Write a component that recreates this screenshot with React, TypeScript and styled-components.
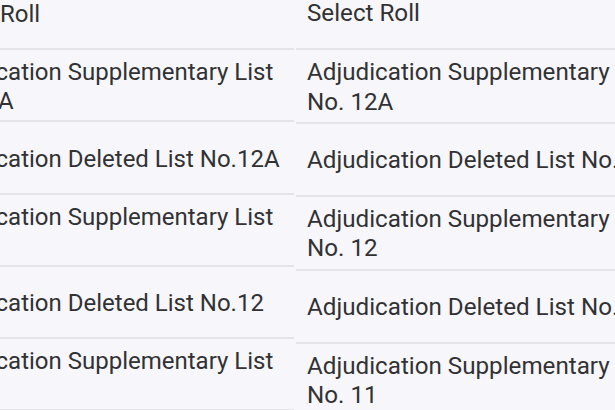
import React from 'react';
import styled, { createGlobalStyle } from 'styled-components';

const GlobalStyle = createGlobalStyle`
  html, body {
    margin: 0;
    padding: 0;
    background: #f7f7fb;
  }
  body {
    font-family: Roboto, "Noto Sans", "Liberation Sans", sans-serif;
  }
`;

const Screen = styled.div`
  display: flex;
  gap: 2px;
  width: 615px;
  height: 410px;
  overflow: hidden;
  background: #f7f7fb;
`;

// one cropped phone shot of the roll list
const Panel = styled.div<{ $width?: number }>`
  flex: ${p => (p.$width ? `0 0 ${p.$width}px` : '1 1 auto')};
  overflow: hidden;
`;

const List = styled.ul<{ $size: number; $row: number; $top: number; $shift: number; $pad: number; $lh: number }>`
  list-style: none;
  margin: ${p => p.$top}px 0 0 ${p => p.$shift}px;
  padding: 0;
  width: 520px;
  font-size: ${p => p.$size}px;
  line-height: ${p => p.$lh}px;
  color: #323235;

  & > li {
    height: ${p => p.$row}px;
    padding-left: ${p => p.$pad}px;
  }
`;

const Row = styled.li`
  box-sizing: border-box;
  display: flex;
  align-items: center;
  padding-top: 3px;
  border-bottom: 2px solid #e3e3e8;
`;

const Label = styled.span`
  width: 400px;
`;

const rolls = [
  'Select Roll',
  'Adjudication Supplementary List\nNo. 12A',
  'Adjudication Deleted List No.12A',
  'Adjudication Supplementary List\nNo. 12',
  'Adjudication Deleted List No.12',
  'Adjudication Supplementary List\nNo. 11',
  'Adjudication Deleted List No.11',
];

interface RollListProps {
  size: number;
  lh: number;
  row: number;
  top: number;
  shift: number;
  pad: number;
}

const RollList: React.FC<RollListProps> = ({ size, lh, row, top, shift, pad }) => (
  <List $size={size} $lh={lh} $row={row} $top={top} $shift={shift} $pad={pad}>
    {rolls.map(r => {
      const [first, second] = r.split('\n');
      return (
        <Row key={r}>
          <Label>
            {first}
            {second && (
              <>
                <br />
                {second}
              </>
            )}
          </Label>
        </Row>
      );
    })}
  </List>
);

export default function App() {
  return (
    <>
      <GlobalStyle />
      <Screen>
        <Panel $width={294}>
          <RollList size={24} lh={28.5} row={72.3} top={-22.3} shift={-72} pad={0} />
        </Panel>
        <Panel>
          <RollList size={24.2} lh={29.5} row={73.4} top={-23} shift={0} pad={11} />
        </Panel>
      </Screen>
    </>
  );
}
